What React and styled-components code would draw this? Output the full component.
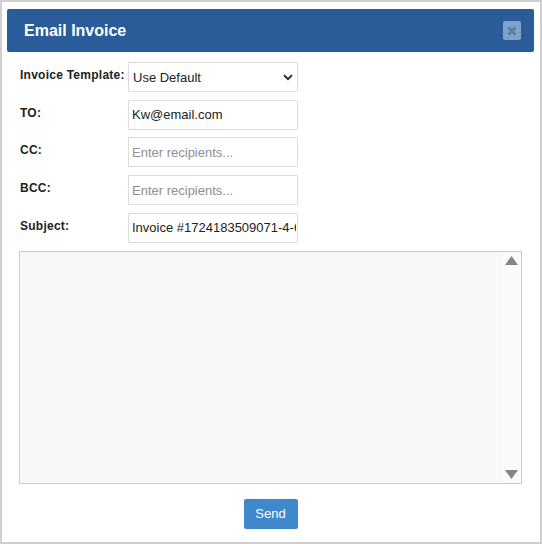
import React from "react";
import styled, { createGlobalStyle } from "styled-components";

const GlobalStyle = createGlobalStyle`
    html, body {
        margin: 0;
        padding: 0;
        background: #fff;
        font-family: "Liberation Sans", Arial, sans-serif;
    }
`;

export default function App() {
    return (
        <>
            <GlobalStyle />
            <Dialog>
                <Header>
                    <Title>Email Invoice</Title>
                    <CloseButton aria-label="Close">
                        <svg width="10" height="10" viewBox="0 0 10 10">
                            <path d="M1.5 1.5 L8.5 8.5 M8.5 1.5 L1.5 8.5" stroke="#587da6" strokeWidth="2.8" />
                        </svg>
                    </CloseButton>
                </Header>
                <Form>
                    <Row>
                        <Label>Invoice Template:</Label>
                        <SelectBox>
                            Use Default
                            <svg width="10" height="7" viewBox="0 0 10 7">
                                <path d="M1 1.2 L5 5.2 L9 1.2" fill="none" stroke="#222" strokeWidth="1.8" />
                            </svg>
                        </SelectBox>
                    </Row>
                    <Row>
                        <Label>TO:</Label>
                        <Input defaultValue="Kw@email.com" />
                    </Row>
                    <Row>
                        <Label>CC:</Label>
                        <Input placeholder="Enter recipients..." />
                    </Row>
                    <Row>
                        <Label>BCC:</Label>
                        <Input placeholder="Enter recipients..." />
                    </Row>
                    <Row>
                        <Label>Subject:</Label>
                        <Input defaultValue="Invoice #1724183509071-4-6" />
                    </Row>
                </Form>
                <Editor>
                    <EditorBody />
                    <ScrollTrack>
                        <svg width="13" height="9" viewBox="0 0 13 9">
                            <path d="M6.5 0 L13 9 L0 9 Z" fill="#858585" />
                        </svg>
                        <svg width="13" height="9" viewBox="0 0 13 9">
                            <path d="M0 0 L13 0 L6.5 9 Z" fill="#858585" />
                        </svg>
                    </ScrollTrack>
                </Editor>
                <Footer>
                    <SendButton>Send</SendButton>
                </Footer>
            </Dialog>
        </>
    );
}

const Dialog = styled.div`
    box-sizing: border-box;
    width: 542px;
    height: 544px;
    border: 2px solid #cfcfcf;
    padding: 7px 6px 0 5px;
    background: #fff;
    overflow: hidden;
`;

const Header = styled.div`
    box-sizing: border-box;
    height: 43px;
    width: 527px;
    display: flex;
    align-items: center;
    justify-content: space-between;
    padding: 0 13px 0 17px;
    background: #295c98;
    border-radius: 2px;
`;

const Title = styled.h2`
    margin: 0;
    color: #fff;
    font-size: 16px;
    font-weight: 700;
`;

const CloseButton = styled.button`
    width: 18px;
    height: 19px;
    padding: 0;
    border: 0;
    border-radius: 2px;
    background: #7fa2ca;
    display: flex;
    align-items: center;
    justify-content: center;
`;

const Form = styled.div`
    display: flex;
    flex-direction: column;
    gap: 7.7px;
    margin: 10px 0 0 12px;
`;

const Row = styled.div`
    display: grid;
    grid-template-columns: 109px 170px;
    height: 30px;
`;

const Label = styled.label`
    font-size: 12px;
    font-weight: 700;
    line-height: 26px;
    color: #222;
    white-space: nowrap;
    letter-spacing: 0.25px;
    padding-left: 1px;
`;

const fieldStyles = `
    box-sizing: border-box;
    width: 170px;
    height: 30px;
    border: 1px solid #dcdcdc;
    border-radius: 1px;
    background: #fff;
    color: #222;
    font-family: "Liberation Sans", Arial, sans-serif;
    font-size: 13px;
`;

const SelectBox = styled.div`
    ${fieldStyles}
    display: flex;
    align-items: center;
    justify-content: space-between;
    padding: 1px 4px 0 4px;
`;

const Input = styled.input`
    ${fieldStyles}
    padding: 0 1px 0 3px;
    outline: none;

    &::placeholder {
        color: #8f8f8f;
        opacity: 1;
    }
`;

const Editor = styled.div`
    box-sizing: border-box;
    display: flex;
    width: 503px;
    height: 233px;
    margin: 8px 0 0 12px;
    border: 1px solid #c9ccd3;
    background: #f7f8fa;
`;

const EditorBody = styled.div`
    flex: 1;
`;

const ScrollTrack = styled.div`
    box-sizing: border-box;
    width: 19px;
    background: #fafafa;
    display: flex;
    flex-direction: column;
    align-items: center;
    justify-content: space-between;
    padding: 4px 0;
`;

const Footer = styled.div`
    display: flex;
    justify-content: center;
    width: 527px;
    margin-top: 15px;
`;

const SendButton = styled.button`
    width: 54px;
    height: 30px;
    padding: 0;
    border: 0;
    border-radius: 2px;
    background: #3f88cb;
    color: #fff;
    font-family: "Liberation Sans", Arial, sans-serif;
    font-size: 13px;
`;
